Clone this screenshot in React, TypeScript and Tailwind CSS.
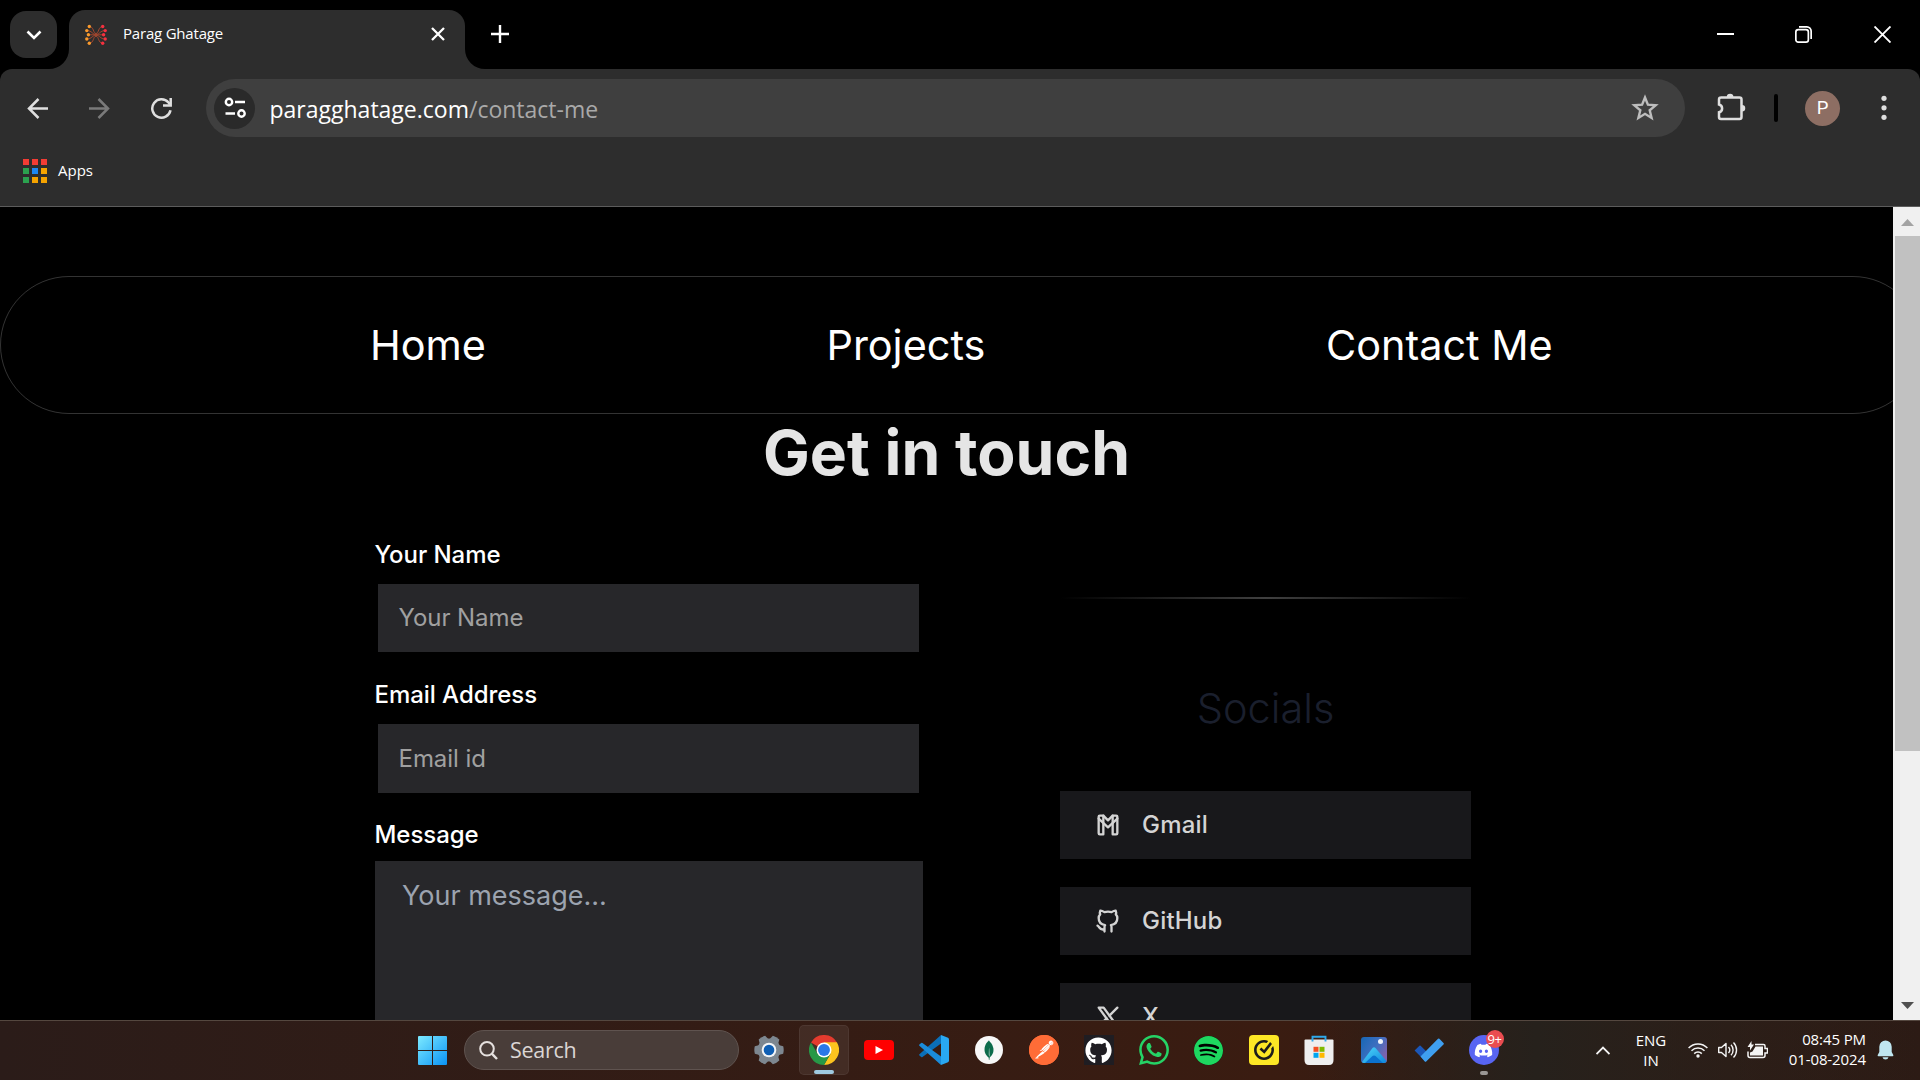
import React from "react";
import type { ReactNode } from "react";
import { TbBrandGmail, TbBrandGithub, TbBrandX } from "react-icons/tb";
import { FaDiscord, FaGithub } from "react-icons/fa";
import { SiMongodb, SiPostman, SiSpotify, SiWhatsapp, SiNorton } from "react-icons/si";

function Favicon() {
  const rows = [2.5, 6.6, 10.8, 15, 19.2];
  const outer = [4.3, 1.8, 3.4, 1.8, 4.3];
  return (
    <svg className="size-[22px]" viewBox="0 0 22 22" fill="none">
      <g stroke="#b04a2e" strokeWidth="0.9">
        <path d="M4.300 2.500C9 2.500 8 9.500 11 9.500s2-7 6.700-7" />
        <path d="M1.800 6.600C7 6.600 7 10.300 11 10.300s4-3.700 9.200-3.700" />
        <path d="M3.400 10.800h15.200" />
        <path d="M1.800 15C7 15 7 11.300 11 11.300s4 3.700 9.200 3.700" />
        <path d="M4.300 19.200C9 19.200 8 12.200 11 12.200s2 7 6.700 7" />
      </g>
      {rows.map((y, i) => (
        <g key={y}>
          <circle cx={outer[i]} cy={y} r="1.700" fill="#fb9a2c" />
          <circle cx={22 - outer[i]} cy={y} r="1.700" fill="#f5303f" />
        </g>
      ))}
    </svg>
  );
}

function TabStrip() {
  return (
    <div className="flex h-[69px] items-start bg-black">
      <div className="ml-[10px] mt-[11px] flex size-[47px] items-center justify-center rounded-[16px] bg-[#2d2d2d]">
        <svg className="size-[16px]" viewBox="0 0 16 16" fill="none" stroke="#fff" strokeWidth="2.600">
          <path d="M1.500 4.500 8 11l6.500-6.500" />
        </svg>
      </div>
      <div className="relative ml-[12px] mt-[10px] flex h-[59px] w-[396px] items-start rounded-t-[16px] bg-[#2d2d2d]">
        <svg className="absolute -left-[20px] bottom-0 size-[20px]" viewBox="0 0 20 20" fill="#2d2d2d">
          <path d="M0 20A20 20 0 0 0 20 0V20Z" />
        </svg>
        <svg className="absolute -right-[20px] bottom-0 size-[20px]" viewBox="0 0 20 20" fill="#2d2d2d">
          <path d="M20 20A20 20 0 0 1 0 0V20Z" />
        </svg>
        <div className="ml-[16px] mt-[14px]">
          <Favicon />
        </div>
        <span className="ml-[16px] mt-[12px] text-[15px] leading-[22px] tracking-[-0.2px] text-white">Parag Ghatage</span>
        <svg className="ml-auto mr-[20px] mt-[17px] size-[14px]" viewBox="0 0 14 14" stroke="#fff" strokeWidth="2.300">
          <path d="M1 1 13 13M13 1 1 13" />
        </svg>
      </div>
      <svg className="ml-[26px] mt-[25px] size-[18px]" viewBox="0 0 18 18" stroke="#fff" strokeWidth="2.400">
        <path d="M9 0V18M0 9H18" />
      </svg>
      <div className="ml-auto mr-[29px] mt-[26px] flex items-center">
        <svg className="h-[17px] w-[17px]" viewBox="0 0 17 17" stroke="#fff" strokeWidth="2">
          <path d="M0 8H17" />
        </svg>
        <svg className="ml-[61px] size-[17px]" viewBox="0 0 17 17" fill="none" stroke="#fff" strokeWidth="1.700">
          <rect x="0.850" y="3.600" width="12.500" height="12.500" rx="2.400" />
          <path d="M4 0.850H11.800A4.300 4.300 0 0 1 16.150 5.200V13" />
        </svg>
        <svg className="ml-[62px] size-[17px]" viewBox="0 0 17 17" stroke="#fff" strokeWidth="1.900">
          <path d="M0.500 0.500 16.500 16.500M16.500 0.500 0.500 16.500" />
        </svg>
      </div>
    </div>
  );
}

function Toolbar() {
  return (
    <div className="bg-black">
      <div className="rounded-t-[12px] border-b border-[#5c5c5c] bg-[#2d2d2d]">
        <div className="flex h-[78px] items-center">
          <svg className="ml-[27px] size-[21px]" viewBox="0 0 21 21" fill="none" stroke="#dfdfdf" strokeWidth="2.500">
            <path d="M21 10.500H2M11.500 1 2 10.500 11.500 20" />
          </svg>
          <svg className="ml-[41px] size-[21px]" viewBox="0 0 21 21" fill="none" stroke="#7a7a7a" strokeWidth="2.500">
            <path d="M0 10.500H19M9.500 1 19 10.500 9.500 20" />
          </svg>
          <svg className="ml-[39.500px] size-[23px]" viewBox="0 0 23 23" fill="none" stroke="#dfdfdf" strokeWidth="2.500">
            <path d="M20.500 13.200A9.200 9.200 0 1 1 18.500 5.500L20 7.500" />
            <path d="M20.700 1V8.500H13" />
          </svg>
          <div className="ml-[33.500px] flex h-[58px] w-[1479px] items-center rounded-full bg-[#3f3f3f]">
            <div className="ml-[8px] flex size-[41px] items-center justify-center rounded-full bg-[#2a2a2a]">
              <svg className="size-[22px]" viewBox="0 0 22 22" fill="none" stroke="#fff" strokeWidth="2.400">
                <circle cx="5" cy="5" r="3.200" />
                <path d="M11 5H21M1.500 16.500H11" />
                <circle cx="17.500" cy="16.500" r="3.200" />
              </svg>
            </div>
            <span className="ml-[14.500px] pt-[1px] text-[23px] leading-[30px] text-white">
              paragghatage.com<span className="text-[#a9a9a9]">/contact-me</span>
            </span>
            <svg className="ml-auto mr-[26px] size-[28px]" viewBox="0 0 28 28" fill="none" stroke="#bdbdbd" strokeWidth="2.400">
              <path d="M14 3.500 16.900 10.700 24.700 11.300 18.700 16.300 20.600 24 14 19.800 7.400 24 9.300 16.300 3.300 11.300 11.100 10.700Z" />
            </svg>
          </div>
          <svg className="ml-[31px] size-[30px]" viewBox="0 0 30 30" fill="none">
            <path d="M4.500 4.500H23.500Q25.500 4.500 25.500 6.500V24Q25.500 26 23.500 26H5Q3 26 3 24V19.300A4 4 0 0 0 3 11.500V6.500Q3 4.500 5 4.500Z" stroke="#dfdfdf" strokeWidth="2.500" />
            <path d="M10.800 4A3.300 3.300 0 0 1 17.400 4ZM26 12A3.200 3.200 0 0 1 26 18.500Z" fill="#dfdfdf" />
          </svg>
          <div className="ml-[28px] h-[28px] w-[4px] rounded-full bg-black" />
          <div className="ml-[27px] flex size-[35px] items-center justify-center rounded-full bg-[#8d6e63] font-[Roboto] text-[18.500px] leading-none text-white">P</div>
          <svg className="ml-[41px] h-[26px] w-[6px]" viewBox="0 0 6 26" fill="#dfdfdf">
            <circle cx="3" cy="3.300" r="2.600" />
            <circle cx="3" cy="12.800" r="2.600" />
            <circle cx="3" cy="22.300" r="2.600" />
          </svg>
        </div>
        <div className="flex h-[59px] items-start">
          <div className="ml-[23px] mt-[12px] grid grid-cols-3 gap-x-[3px] gap-y-[3px]">
            <i className="size-[6px] bg-[#f23c34]" /><i className="size-[6px] bg-[#f23c34]" /><i className="size-[6px] bg-[#f23c34]" />
            <i className="size-[6px] bg-[#2ba24f]" /><i className="size-[6px] bg-[#1d87f3]" /><i className="size-[6px] bg-[#f5a300]" />
            <i className="size-[6px] bg-[#2ba24f]" /><i className="size-[6px] bg-[#f5a300]" /><i className="size-[6px] bg-[#f5a300]" />
          </div>
          <span className="ml-[11px] mt-[12px] text-[15px] leading-[22px] text-white">Apps</span>
        </div>
      </div>
    </div>
  );
}

function Label({ children }: { children: ReactNode }) {
  return <div className="-ml-[0.500px] h-[45px] text-[24px] font-medium leading-[32px] tracking-[-0.05px] text-white">{children}</div>;
}

function Placeholder({ children }: { children: ReactNode }) {
  return <div className="flex h-full items-center pl-[20.500px] text-[24px] tracking-[-0.05px] text-[#a0a0a0]">{children}</div>;
}

function SocialCard({ icon, name }: { icon: ReactNode; name: string }) {
  return (
    <div className="flex h-[68px] w-[411px] items-center gap-[20.500px] bg-[#18181b] pl-[33.500px] text-[#d4d4d4]">
      {icon}
      <span className="pb-[1px] text-[24px] font-medium leading-[34px] tracking-[0.2px]">{name}</span>
    </div>
  );
}

function Page() {
  return (
    <main className="flex-1 overflow-hidden bg-black font-[Inter,sans-serif]">
      <nav className="mt-[69px] flex h-[138px] w-[1922px] items-center gap-[340.500px] rounded-full border border-white/20 pl-[369px] text-[41.400px] text-white">
        <span>Home</span>
        <span>Projects</span>
        <span className="whitespace-nowrap">Contact Me</span>
      </nav>
      <h1 className="mt-[3px] text-center text-[62.400px] font-bold leading-[72px] text-[#e5e5e5]">Get in touch</h1>
      <div className="mt-[50px] flex">
        <form className="ml-[375px] w-[548px]">
          <div className="h-[140px]">
            <Label>Your Name</Label>
            <div className="ml-[3px] h-[68px] w-[541px] bg-[#27272a]">
              <Placeholder>Your Name</Placeholder>
            </div>
          </div>
          <div className="h-[140px]">
            <Label>Email Address</Label>
            <div className="ml-[3px] h-[69px] w-[541px] bg-[#27272a] pt-[1px]">
              <Placeholder>Email id</Placeholder>
            </div>
          </div>
          <div className="flex h-[42px] items-start">
            <Label>Message</Label>
          </div>
          <div className="h-[240px] bg-[#27272a] pl-[27px] pt-[15px] text-[27px] leading-[40px] text-[#9ca3af]">Your message...</div>
        </form>
        <section className="ml-[137px] w-[411px] pt-[58px]">
          <div className="h-[2px] bg-linear-to-r from-transparent via-[#404040] to-transparent" />
          <h2 className="mt-[79px] text-center text-[41.500px] font-light leading-[60px] text-[#1a1f2d]">Socials</h2>
          <div className="mt-[53px] flex flex-col gap-[28px]">
            <SocialCard icon={<TbBrandGmail className="size-[28px]" />} name="Gmail" />
            <SocialCard icon={<TbBrandGithub className="size-[28px]" />} name="GitHub" />
            <SocialCard icon={<TbBrandX className="size-[28px]" />} name="X" />
          </div>
        </section>
      </div>
    </main>
  );
}

function Scrollbar() {
  return (
    <div className="flex w-[27px] flex-col items-end bg-[#f0f0f0]">
      <svg className="mr-[6px] mt-[12px] h-[7px] w-[13px]" viewBox="0 0 13 7" fill="#a3a3a3">
        <path d="M6.500 0 13 7H0Z" />
      </svg>
      <div className="mt-[10px] h-[515px] w-[25px] bg-[#c1c1c1]" />
      <svg className="mb-[11px] mr-[6px] mt-auto h-[7px] w-[13px]" viewBox="0 0 13 7" fill="#505050">
        <path d="M0 0H13L6.500 7Z" />
      </svg>
    </div>
  );
}

function Slot({ children, active = false }: { children: ReactNode; active?: boolean }) {
  return (
    <div className="flex w-[55px] shrink-0 justify-center">
      <div className={active ? "relative flex h-[50px] w-[50px] items-center justify-center rounded-[5px] border border-white/6 bg-white/7" : "relative flex h-[50px] w-[50px] items-center justify-center"}>
        {children}
      </div>
    </div>
  );
}

function ChromeLogo() {
  return (
    <svg className="size-[30px]" viewBox="0 0 48 48">
      <path d="M24 24 3.200 12A24 24 0 0 1 44.800 12Z" fill="#e33b2e" />
      <path d="M44.800 12A24 24 0 0 1 24 48L34.400 30 24 12Z" fill="#fcc31e" />
      <path d="M24 48A24 24 0 0 1 3.200 12L13.600 30 34.400 30Z" fill="#279847" />
      <path d="M24 12H44.800L34.400 30Z" fill="#fcc31e" />
      <circle cx="24" cy="24" r="12" fill="#fff" />
      <circle cx="24" cy="24" r="9.500" fill="#2a78e8" />
    </svg>
  );
}

function WindowsLogo() {
  return (
    <svg className="size-[29px]" viewBox="0 0 29 29">
      <defs>
        <linearGradient id="win" x1="0" y1="0" x2="1" y2="1" gradientUnits="objectBoundingBox">
          <stop offset="0" stopColor="#7deaff" />
          <stop offset="1" stopColor="#0a93f5" />
        </linearGradient>
      </defs>
      <path d="M1 0H14V14H0V1Q0 0 1 0ZM15 0H28Q29 0 29 1V14H15ZM0 15H14V29H1Q0 29 0 28ZM15 15H29V28Q29 29 28 29H15Z" fill="url(#win)" />
    </svg>
  );
}

function SettingsLogo() {
  return (
    <svg className="size-[30px]" viewBox="0 0 30 30">
      <g fill="#7d8790">
        <circle cx="15" cy="15" r="11.500" />
        {[30, 90, 150, 210, 270, 330].map((a) => (
          <path key={a} d="M10 5.500 11.300 0.800Q15 -.2 18.700 0.800L20 5.500Z" transform={`rotate(${a} 15 15)`} />
        ))}
      </g>
      <circle cx="15" cy="15" r="7.300" fill="#f3f5f7" />
      <circle cx="15" cy="15" r="5.300" fill="#0f5fb4" />
    </svg>
  );
}

function CodeLogo() {
  return (
    <svg className="size-[30px]" viewBox="0 0 30 30">
      <path d="M22 0 29 2.800Q30 3.300 30 4.500V25.500Q30 26.700 29 27.200L22 30Z" fill="#29a8f2" />
      <path d="M22 0V8.500L3.500 22Q2.800 22.500 2.200 22L0.400 20.400Q-.2 19.700 0.400 19.200Z" fill="#0b6fb8" />
      <path d="M22 30V21.500L3.500 8Q2.800 7.500 2.200 8L0.400 9.600Q-.2 10.300 0.400 10.800Z" fill="#1a8cdb" />
    </svg>
  );
}

function StoreLogo() {
  return (
    <svg className="size-[30px]" viewBox="0 0 30 30">
      <path d="M1.500 4.500H28.500Q29.500 4.500 29.500 5.500V25Q29.500 30 25 30H5Q.5 30 .5 25V5.500Q.5 4.500 1.500 4.500Z" fill="#efefef" />
      <path d="M8.500 6.500V1.800H21.500V6.500" fill="none" stroke="#2fa9ea" strokeWidth="1.900" />
      <path d="M9.500 11.800H14.500V16.800H9.500Z" fill="#f25022" />
      <path d="M15.500 11.800H20.500V16.800H15.500Z" fill="#7fba00" />
      <path d="M9.500 17.800H14.500V22.800H9.500Z" fill="#00a4ef" />
      <path d="M15.500 17.800H20.500V22.800H15.500Z" fill="#ffb900" />
    </svg>
  );
}

function PhotosLogo() {
  return (
    <svg className="size-[26px]" viewBox="0 0 26 26">
      <defs>
        <linearGradient id="sky" x1="0" y1="0" x2="1" y2="0.600">
          <stop offset="0" stopColor="#1767b5" />
          <stop offset="0.600" stopColor="#3f6fc0" />
          <stop offset="1" stopColor="#7d62ad" />
        </linearGradient>
        <linearGradient id="hill" x1="0" y1="0" x2="1" y2="1">
          <stop offset="0" stopColor="#4fd8fb" />
          <stop offset="1" stopColor="#0d86dc" />
        </linearGradient>
      </defs>
      <rect width="26" height="26" rx="3" fill="url(#sky)" />
      <path d="M1 25 11.500 11Q13 9.500 14.500 11L25.500 24Q25 26 23 26H3Q1.500 26 1 25Z" fill="url(#hill)" />
      <path d="M4 26 11.500 19Q13 17.800 14.500 19L22 26Z" fill="#0b72cf" />
      <circle cx="19.500" cy="4.500" r="2.500" fill="#eef3fa" />
    </svg>
  );
}

function TodoLogo() {
  return (
    <svg className="h-[24px] w-[30px]" viewBox="0 0 30 24">
      <path d="M0.600 12.600 5.400 7.800Q6 7.200 6.600 7.800L16.500 17.500 11.500 23.500Z" fill="#1b57b8" />
      <path d="M6.500 18.500 24 .8Q24.700.2 25.400.8L29.500 5Q30.200 5.700 29.500 6.400L12.200 23.500Q11.500 24 10.800 23.500Z" fill="#3f9ff0" />
    </svg>
  );
}

function Taskbar() {
  return (
    <footer className="flex h-[60px] items-center border-t border-[#54473f] bg-linear-to-r from-[#2b1c19] via-[#3a1c11] via-[66%] to-[#2c1b15]">
      <div className="flex h-full w-full items-center bg-linear-to-r from-transparent from-[68%] via-[#26211c] via-[80%] to-transparent pb-[1px]">
        <div className="ml-[418px]">
          <WindowsLogo />
        </div>
        <div className="ml-[17px] flex h-[40px] w-[275px] items-center rounded-full border border-[#5f534f] bg-[#493d39]">
          <svg className="ml-[14px] size-[19px]" viewBox="0 0 19 19" fill="none" stroke="#e6e1df" strokeWidth="2">
            <circle cx="8" cy="7.800" r="6.800" />
            <path d="M12.800 12.600 18 18" strokeWidth="2.400" />
          </svg>
          <span className="ml-[12px] text-[21.500px] leading-[28px] tracking-[-0.300px] text-[#dbd6d4]">Search</span>
        </div>
        <div className="ml-[2px] flex items-center">
          <Slot><SettingsLogo /></Slot>
          <Slot active>
            <ChromeLogo />
            <i className="absolute bottom-0 left-[14px] h-[4px] w-[20px] rounded-full bg-[#9fcae0]" />
          </Slot>
          <Slot>
            <div className="flex h-[20px] w-[30px] items-center justify-center rounded-[4px] bg-[#ff0000]">
              <svg className="h-[8px] w-[8px]" viewBox="0 0 8 8" fill="#fff"><path d="M0.500 0 8 4 0.500 8Z" /></svg>
            </div>
          </Slot>
          <Slot><CodeLogo /></Slot>
          <Slot>
            <div className="flex size-[28px] items-center justify-center rounded-full bg-[#f7f7f7]">
              <SiMongodb className="size-[20px] text-[#0c6b4b]" />
            </div>
          </Slot>
          <Slot>
            <div className="flex size-[30px] items-center justify-center rounded-full bg-[#ff6c37]">
              <div className="flex size-[28px] items-center justify-center rounded-full bg-white">
                <SiPostman className="size-[30px] shrink-0 text-[#ff6c37]" />
              </div>
            </div>
          </Slot>
          <Slot>
            <div className="flex size-[30px] items-center justify-center bg-[#1f1d22]">
              <FaGithub className="size-[27px] text-white" />
            </div>
          </Slot>
          <Slot><SiWhatsapp className="size-[30px] text-[#25d366]" /></Slot>
          <Slot>
            <div className="flex size-[29px] items-center justify-center rounded-full bg-black">
              <SiSpotify className="size-[29px] text-[#1ed760]" />
            </div>
          </Slot>
          <Slot>
            <div className="flex size-[30px] items-center justify-center rounded-[4px] bg-[#fde725]">
              <SiNorton className="size-[20px] text-[#1d1d1b]" />
            </div>
          </Slot>
          <Slot><StoreLogo /></Slot>
          <Slot><PhotosLogo /></Slot>
          <Slot><TodoLogo /></Slot>
          <Slot>
            <div className="flex size-[30px] items-center justify-center rounded-full bg-[#5865f2]">
              <FaDiscord className="size-[19px] text-white" />
            </div>
            <span className="absolute left-[27px] top-[5px] flex size-[18px] items-center justify-center rounded-full bg-[#ea4c50] text-[13px] leading-none tracking-[-0.5px] text-white">9+</span>
            <i className="absolute bottom-0 left-[21px] h-[4px] w-[8px] rounded-full bg-[#9b9794]" />
          </Slot>
        </div>
        <svg className="ml-[85px] h-[9px] w-[14px]" viewBox="0 0 14 9" fill="none" stroke="#f4f4f4" strokeWidth="1.800">
          <path d="M0.500 8 7 1.500 13.500 8" />
        </svg>
        <div className="ml-[26px] flex w-[30px] flex-col items-center text-[15px] leading-[20px] text-white">
          <span>ENG</span>
          <span>IN</span>
        </div>
        <svg className="ml-[22px] h-[16px] w-[20px]" viewBox="0 0 20 16" fill="none" stroke="#f4f4f4" strokeWidth="1.500">
          <path d="M0.600 6A13 13 0 0 1 19.400 6M3.500 8.800A9.200 9.200 0 0 1 16.500 8.800M6.200 11.600A5.400 5.400 0 0 1 13.800 11.600" />
          <circle cx="10" cy="14" r="1.700" fill="#f4f4f4" stroke="none" />
        </svg>
        <svg className="ml-[10px] h-[18px] w-[20px]" viewBox="0 0 20 18" fill="none" stroke="#f4f4f4" strokeWidth="1.400">
          <path d="M0.700 6.500H3.500L8 2.500V15.500L3.500 11.500H0.700Z" strokeLinejoin="round" />
          <path d="M10.500 6A4.500 4.500 0 0 1 10.500 12M13 3.800A7.500 7.500 0 0 1 13 14.200M15.500 1.500A10.800 10.800 0 0 1 15.500 16.500" />
        </svg>
        <svg className="ml-[9px] h-[18px] w-[21px]" viewBox="0 0 21 18">
          <path d="M8 3.500H16.500Q18 3.500 18 5V7.500H20.500V12H18V14.500Q18 16.500 16 16.500H3Q1 16.500 1 14.500V10.500" fill="none" stroke="#f4f4f4" strokeWidth="1.500" />
          <path d="M8.500 5.500H16V14.500H3V11.500L5.500 10.500Z" fill="#f4f4f4" />
          <path d="M4.500 0V3.500H7L3 9.500V6H0.500Z" fill="#f4f4f4" />
        </svg>
        <div className="ml-auto flex flex-col items-end pb-[2px] text-[15px] leading-[20px] tracking-[-0.1px] text-white">
          <span>08:45 PM</span>
          <span>01-08-2024</span>
        </div>
        <svg className="ml-[11px] mr-[26px] h-[20px] w-[17px]" viewBox="0 0 17 20" fill="#bfe6f0">
          <path d="M8.500 0.500A6.200 6.200 0 0 1 14.700 6.700V12L16.300 15Q16.700 16.300 15.500 16.300H1.500Q.3 16.300.7 15L2.300 12V6.700A6.200 6.200 0 0 1 8.500.5Z" />
          <path d="M5.500 17.300H11.500Q11 19.500 8.500 19.500T5.500 17.300Z" />
        </svg>
      </div>
    </footer>
  );
}

export default function App() {
  return (
    <div className="flex h-[1080px] w-[1920px] flex-col overflow-hidden bg-black font-['Open_Sans',sans-serif]">
      <TabStrip />
      <Toolbar />
      <div className="flex min-h-0 flex-1">
        <Page />
        <Scrollbar />
      </div>
      <Taskbar />
    </div>
  );
}
